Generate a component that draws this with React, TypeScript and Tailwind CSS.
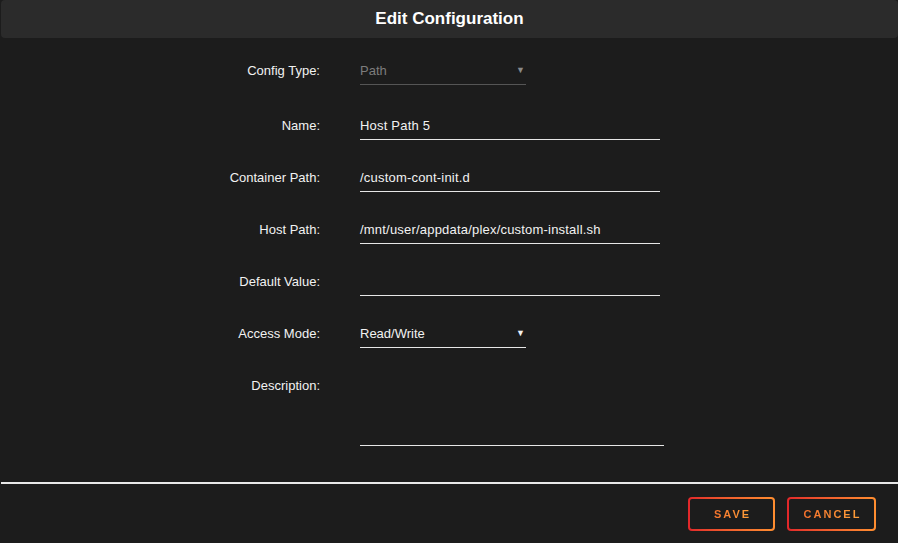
import type { ReactNode } from 'react'

const font = { fontFamily: '"Liberation Sans", Arial, sans-serif' }

function Row({ label, children, first }: { label: string; children: ReactNode; first?: boolean }) {
  return (
    <div className={`flex items-start ${first ? '' : 'mt-[24px]'}`}>
      <div className="w-[320px] h-[28px] leading-[28px] text-right text-[13px] text-[#f2f2f2] shrink-0">{label}</div>
      <div className="ml-[40px]">{children}</div>
    </div>
  )
}

function TextField({ value, width = 'w-[300px]' }: { value: string; width?: string }) {
  return (
    <div className={`${width} h-[28px] leading-[27px] border-b border-[#e6e6e6] text-[13px] text-[#f2f2f2] tracking-[0.2px]`}>{value}</div>
  )
}

function Select({ value, disabled }: { value: string; disabled?: boolean }) {
  return (
    <div
      className={`w-[166px] h-[28px] leading-[27px] border-b flex justify-between pr-[1px] text-[13px] ${
        disabled ? 'border-[#555555] text-[#7d7d7d]' : 'border-[#e6e6e6] text-[#f2f2f2]'
      }`}
    >
      <span>{value}</span>
      <span className={`text-[9px] ${disabled ? 'text-[#8a8a8a]' : 'text-[#f2f2f2]'}`}>▼</span>
    </div>
  )
}

function GradButton({ label, width }: { label: string; width: string }) {
  return (
    <button className={`${width} h-[34px] p-[2px] rounded-[4px] bg-gradient-to-r from-[#e2262a] to-[#ff8e30]`}>
      <span className="flex h-full w-full items-center justify-center rounded-[2px] bg-[#1c1c1c]">
        <span className="text-[11px] font-bold tracking-[2px] pl-[2px] bg-gradient-to-r from-[#f5702c] to-[#ffa03a] bg-clip-text text-transparent">
          {label}
        </span>
      </span>
    </button>
  )
}

export default function App() {
  return (
    <div className="w-[898px] h-[543px] bg-[#1c1c1c] overflow-hidden" style={font}>
      <div className="ml-[1px] h-[38px] bg-[#2b2b2b] rounded-[4px] flex items-center justify-center">
        <h1 className="text-[17px] font-bold text-white">Edit Configuration</h1>
      </div>
      <div className="pt-[19px] h-[444px]">
        <Row label="Config Type:" first>
          <Select value="Path" disabled />
        </Row>
        <div className="mt-[27px]">
          <Row label="Name:" first>
            <TextField value="Host Path 5" />
          </Row>
        </div>
        <Row label="Container Path:">
          <TextField value="/custom-cont-init.d" />
        </Row>
        <Row label="Host Path:">
          <TextField value="/mnt/user/appdata/plex/custom-install.sh" />
        </Row>
        <Row label="Default Value:">
          <TextField value="" />
        </Row>
        <Row label="Access Mode:">
          <Select value="Read/Write" />
        </Row>
        <Row label="Description:">
          <div className="w-[304px] h-[74px] border-b border-[#e6e6e6]" />
        </Row>
      </div>
      <div className="ml-[1px] border-t-2 border-[#e8e8e8]" />
      <div className="flex justify-end gap-[12px] pr-[22px] pt-[13px]">
        <GradButton label="SAVE" width="w-[87px]" />
        <GradButton label="CANCEL" width="w-[89px]" />
      </div>
    </div>
  )
}
